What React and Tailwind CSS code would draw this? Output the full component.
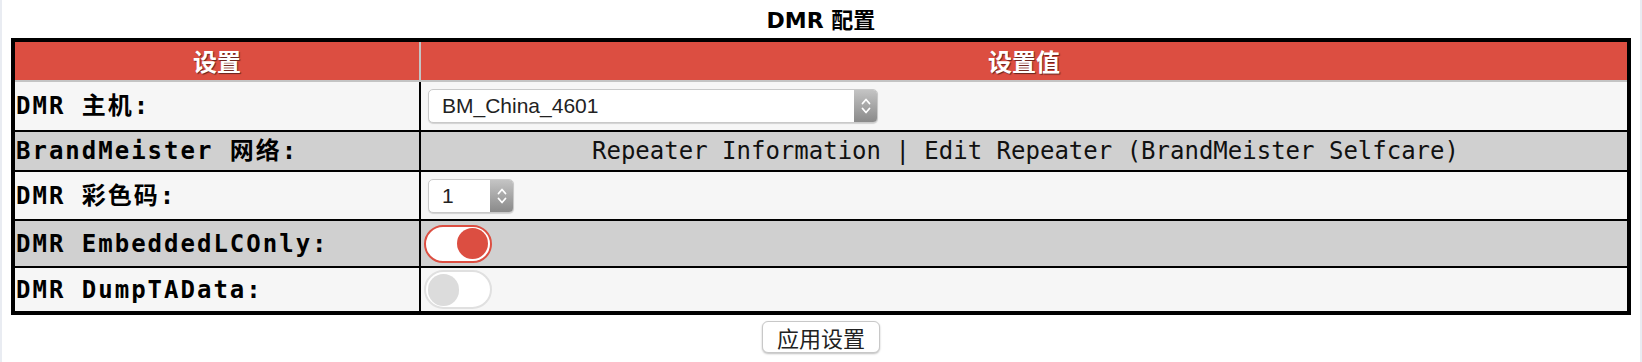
import React from "react";

function Chevrons() {
  return (
    <svg width="12" height="22" viewBox="0 0 12 22" fill="none">
      <path d="M2.5 8.5 L6 4.5 L9.5 8.5" stroke="white" strokeWidth="1.8" strokeLinecap="round" strokeLinejoin="round" />
      <path d="M2.5 13.5 L6 17.5 L9.5 13.5" stroke="white" strokeWidth="1.8" strokeLinecap="round" strokeLinejoin="round" />
    </svg>
  );
}

function Select({ value, width }) {
  return (
    <div
      className={`ml-[4px] flex h-[34px] items-stretch overflow-hidden rounded-[5px] border border-[#c9c9c9] bg-white shadow-[0_1px_1px_rgba(0,0,0,0.15)] ${width}`}
    >
      <span className="flex flex-1 items-center pl-[13px] font-['Liberation_Sans',Arial,sans-serif] text-[21px] text-[#222]">
        {value}
      </span>
      <div className="flex w-[23px] items-center justify-center bg-gradient-to-b from-[#c4c4c4] to-[#8a8a8a]">
        <Chevrons />
      </div>
    </div>
  );
}

function ToggleOn() {
  return (
    <div className="flex h-[38px] w-[68px] items-center justify-end rounded-full border-2 border-[#dc4e41] bg-white pr-[2px]">
      <div className="h-[31px] w-[31px] rounded-full bg-[#dc4e41]" />
    </div>
  );
}

function ToggleOff() {
  return (
    <div className="flex h-[39px] w-[68px] items-center justify-start rounded-full border-2 border-[#e0e0e0] bg-white pl-[2px]">
      <div className="h-[32px] w-[31px] rounded-full bg-[#dcdcdc]" />
    </div>
  );
}

function Row({ rowClass, label, children, center }) {
  return (
    <div className={`flex ${rowClass}`}>
      <div className="flex w-[406px] shrink-0 items-center whitespace-nowrap border-r-2 border-black pl-[1px] font-['DejaVu_Sans_Mono','Noto_Sans_CJK_SC',monospace] text-[24px] font-bold tracking-[2px] text-black">
        {label}
      </div>
      <div className={`flex flex-1 items-center pl-[3px] ${center ? "justify-center" : ""}`}>
        {children}
      </div>
    </div>
  );
}

export default function App() {
  return (
    <div className="h-[362px] w-[1642px] border-x-2 border-[#e9ecf2] bg-white px-[9px]">
      <div className="h-[38px] pt-[3px] text-center font-['DejaVu_Sans','Noto_Sans_CJK_SC',sans-serif] text-[22px] font-bold leading-[35px] text-black">
        DMR 配置
      </div>
      <div className="border-4 border-black">
        <div className="flex h-[40px] border-b-2 border-[#c4c4c4] bg-[#dc4e41] font-['Noto_Sans_CJK_SC',sans-serif] text-[24px] font-bold text-white [text-shadow:1px_1px_1px_rgba(0,0,0,0.55)]">
          <div className="flex w-[406px] shrink-0 items-center justify-center border-r-2 border-[#c4c4c4]">设置</div>
          <div className="flex flex-1 items-center justify-center">设置值</div>
        </div>
        <Row rowClass="h-[48px] bg-[#f6f6f6]" label="DMR 主机:">
          <Select value="BM_China_4601" width="w-[450px]" />
        </Row>
        <Row rowClass="h-[40px] border-t-2 border-black bg-[#d0d0d0]" label="BrandMeister 网络:" center>
          <span className="font-['DejaVu_Sans_Mono',monospace] text-[24px] text-[#111] whitespace-nowrap">
            Repeater Information | Edit Repeater (BrandMeister Selfcare)
          </span>
        </Row>
        <Row rowClass="h-[49px] border-t-2 border-black bg-[#f6f6f6]" label="DMR 彩色码:">
          <Select value="1" width="w-[86px]" />
        </Row>
        <Row rowClass="h-[47px] border-t-2 border-black bg-[#d0d0d0]" label="DMR EmbeddedLCOnly:">
          <ToggleOn />
        </Row>
        <Row rowClass="h-[45px] border-t-2 border-black bg-[#f6f6f6]" label="DMR DumpTAData:">
          <ToggleOff />
        </Row>
      </div>
      <div className="flex justify-center pt-[6px]">
        <button className="h-[32px] w-[118px] rounded-[6px] border border-[#c8c8c8] bg-white font-['Noto_Sans_CJK_SC',sans-serif] text-[22px] leading-none text-[#222] shadow-[0_1px_2px_rgba(0,0,0,0.25)]">
          应用设置
        </button>
      </div>
    </div>
  );
}
